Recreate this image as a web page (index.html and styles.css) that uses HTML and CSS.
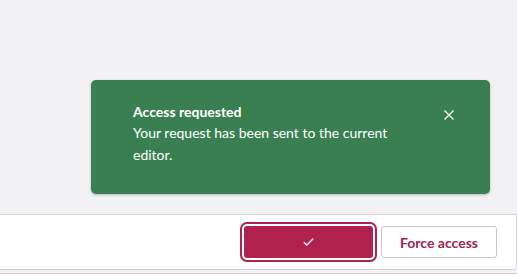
FILE: index.html
```html
<!DOCTYPE html>
<html>
<head>
<meta charset="utf-8">
<link rel="stylesheet" href="styles.css">
</head>
<body>
<div class="page">
  <div class="stage">
    <div class="toast" role="status">
      <div class="toast-text">
        <div class="toast-title">Access requested</div>
        <div class="toast-body">Your request has been sent to the current editor.</div>
      </div>
      <button class="toast-close" aria-label="Close">
        <svg width="10" height="10" viewBox="0 0 10 10"><path d="M0.5 0.5 L9.5 9.5 M9.5 0.5 L0.5 9.5" stroke="#fff" stroke-width="1.3" fill="none"/></svg>
      </button>
    </div>
  </div>
  <div class="footer">
    <button class="btn btn-primary" aria-label="Confirm">
      <svg width="11" height="8" viewBox="0 0 11 8"><path d="M0.8 4.2 L3.8 7 L10.2 0.8" stroke="#fff" stroke-width="1.3" fill="none"/></svg>
    </button>
    <button class="btn btn-secondary">Force access</button>
  </div>
  <div class="under"></div>
</div>
</body>
</html>
```
FILE: styles.css
```css
* { box-sizing: border-box; }
html, body { margin: 0; padding: 0; }
body {
  background: #f2f2f4;
  font-family: Lato, "Open Sans", sans-serif;
  width: 517px;
  height: 274px;
  overflow: hidden;
}
.page { display: flex; flex-direction: column; height: 274px; }
.stage {
  height: 214px;
  display: flex;
  justify-content: flex-end;
  align-items: flex-start;
  padding: 80px 27px 0 0;
}
.toast {
  width: 399px;
  height: 114px;
  background: #3a7f51;
  border-radius: 5px;
  box-shadow: 0 1px 3px rgba(0,0,0,0.25);
  color: #fff;
  display: flex;
  justify-content: space-between;
  padding: 22px 36px 0 42px;
}
.toast-text { width: 280px; font-size: 14px; }
.toast-title { font-weight: 700; line-height: 20px; }
.toast-body { line-height: 22px; }
.toast-close {
  background: none; border: 0; padding: 0;
  width: 10px; height: 10px;
  margin-top: 8px;
  display: flex;
  cursor: pointer;
}
.footer {
  height: 56px;
  background: #fff;
  border-top: 1px solid #d3d3d7;
  border-bottom: 1px solid #cfcfd3;
  border-right: 1px solid #d3d3d7;
  border-bottom-right-radius: 4px;
  display: flex;
  justify-content: flex-end;
  align-items: center;
  gap: 8px;
  padding-right: 19px;
}
.btn {
  height: 32px;
  border-radius: 3px;
  font-family: Lato, "Open Sans", sans-serif;
  font-size: 14px;
  font-weight: 700;
  display: flex;
  align-items: center;
  justify-content: center;
  cursor: pointer;
}
.btn-primary {
  width: 129px;
  background: #b0214d;
  border: 0;
  box-shadow: 0 0 0 2px #fff, 0 0 0 4px #b0214d;
  border-radius: 3px;
}
.btn-secondary {
  width: 116px;
  background: #fff;
  border: 1px solid #c6c6cb;
  color: #a3204c;
}
.under {
  margin-top: 3px;
  height: 1px;
  background: #d6c9d3;
}
```
